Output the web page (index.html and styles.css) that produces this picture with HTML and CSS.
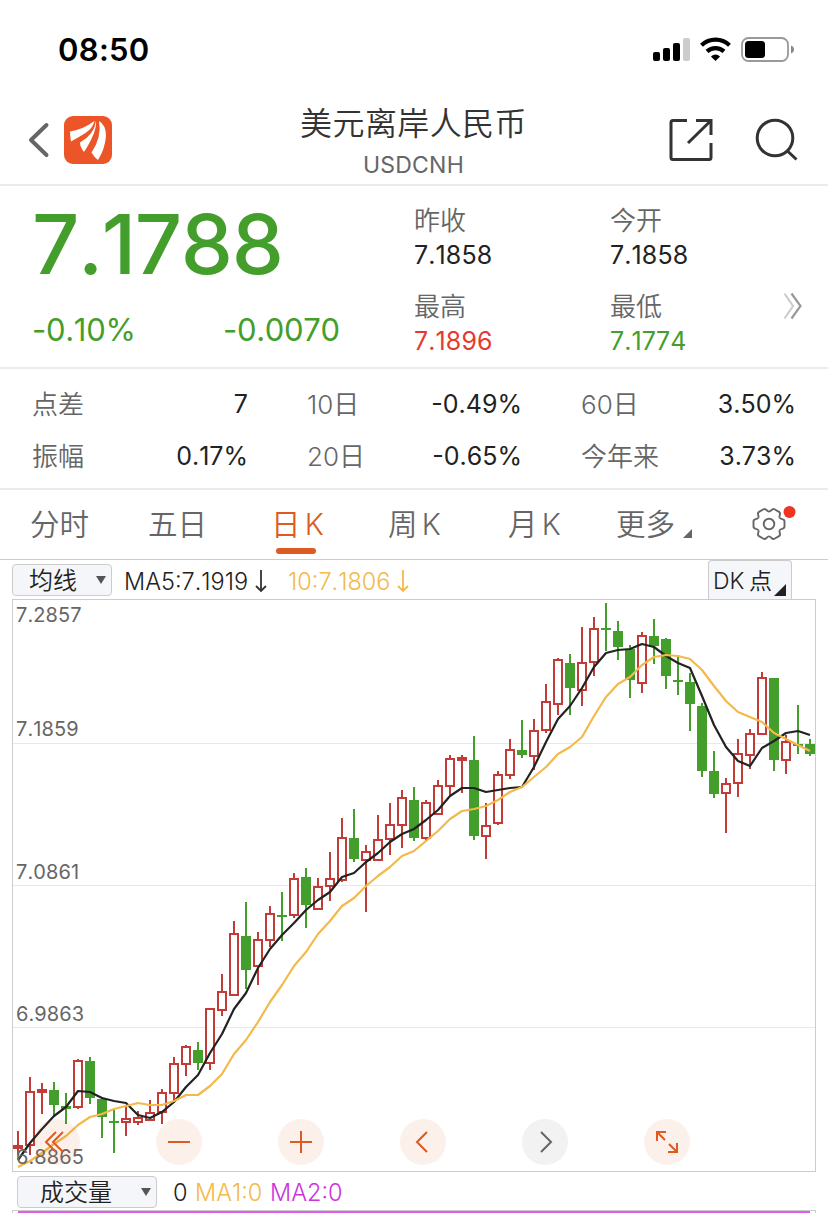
FILE: index.html
```html
<!DOCTYPE html>
<html lang="zh-CN">
<head>
    <meta charset="UTF-8">
    <meta name="viewport" content="width=device-width, initial-scale=1.0">
    <title>美元离岸人民币 USDCNH</title>
    <link rel="stylesheet" href="styles.css">
</head>
<body>
    <div class="statusbar">
        <span class="time">08:50</span>
        <svg class="status-icons" width="144" height="28" viewBox="652 36 144 28">
            <rect x="653" y="52" width="7" height="9" rx="2"/>
            <rect x="663" y="48" width="7" height="13" rx="2"/>
            <rect x="673" y="43" width="7" height="18" rx="2"/>
            <rect x="683" y="38" width="7" height="23" rx="2" fill="#ccc"/>
            <g fill="none" stroke="#000" stroke-width="4.2">
                <path d="M701.5 45.2a20.5 20.5 0 0 1 28 0"/>
                <path d="M707 51.4a12.5 12.5 0 0 1 17 0"/>
            </g>
            <path d="M715.5 61l-4.6-4.5q4.6-3.8 9.2 0z"/>
            <rect x="742" y="38" width="46" height="23" rx="6.5" fill="none" stroke="#999" stroke-width="1.8"/>
            <rect x="745" y="41" width="20" height="17" rx="3.5"/>
            <path d="M791 45.5q3 1.2 3 4t-3 4z" fill="#888"/>
        </svg>
    </div>

    <header class="header">
        <div class="header-left">
            <svg width="22" height="36" viewBox="0 0 22 36"><path d="M18.5 3L3 18l15.500 15" fill="none" stroke="#666" stroke-width="4" stroke-linecap="round" stroke-linejoin="round"/></svg>
            <svg class="logo" width="48" height="48" viewBox="0 0 48 48">
                <rect width="48" height="48" rx="9" fill="#ec5528"/>
                <path d="M6 15.500Q18 14 30.500 5Q29 12 21.500 17Q15 21 7 25.500Q6 20 6 15.500z" fill="#fff"/>
                <path d="M32 5Q33 16 20 36Q16 31 16 26.500Q30 19 32 5z" fill="#fff"/>
                <path d="M35 5Q42 9 42 20Q41 33 34 44Q30 41 27.500 36.500Q38 21 35 5z" fill="#fff"/>
            </svg>
        </div>
        <div class="header-title">
            <h1>美元离岸人民币</h1>
            <p>USDCNH</p>
        </div>
        <div class="header-right">
            <svg width="44" height="44" viewBox="669 118 44 44" fill="none" stroke="#333" stroke-width="3">
                <path d="M687 120.500h-14q-2 0-2 2v35q0 2 2 2h36q2 0 2-2v-14.500M696 120.500h15v14.500M711 120.500l-23 22.500"/>
            </svg>
            <svg width="44" height="44" viewBox="755 118 44 44" fill="none" stroke="#333" stroke-width="3">
                <circle cx="775" cy="138" r="17.800"/>
                <path d="M787.500 151l9 8.500"/>
            </svg>
        </div>
    </header>

    <section class="quote">
        <div class="price">
            <div class="price-now">7.1788</div>
            <div class="price-change"><span>-0.10%</span><span>-0.0070</span></div>
        </div>
        <div class="ohlc">
            <div><p>昨收</p><b>7.1858</b></div>
            <div><p>今开</p><b>7.1858</b></div>
            <div><p>最高</p><b class="up">7.1896</b></div>
            <div><p>最低</p><b class="down">7.1774</b></div>
        </div>
        <svg class="more" width="20" height="28" viewBox="0 0 20 28" fill="none" stroke-width="2.200">
            <path d="M1.500 1.500L10 14L1.500 26.500" stroke="#ccc"/>
            <path d="M8.500 1.500L17.500 14L8.500 26.500" stroke="#999"/>
        </svg>
    </section>

    <section class="stats">
        <div><span>点差</span><b>7</b></div>
        <div><span>10<i>日</i></span><b>-0.49%</b></div>
        <div><span>60<i>日</i></span><b>3.50%</b></div>
        <div><span>振幅</span><b>0.17%</b></div>
        <div><span>20<i>日</i></span><b>-0.65%</b></div>
        <div><span>今年来</span><b>3.73%</b></div>
    </section>

    <nav class="tabs">
        <a>分时</a>
        <a>五日</a>
        <a class="active">日 K</a>
        <a>周 K</a>
        <a>月 K</a>
        <a>更多<i class="corner"></i></a>
        <svg class="gear" width="46" height="40" viewBox="-18 -20 46 40">
            <defs><path id="lobe" d="M10.700 -6.200C12 -4 15.500 -5.800 15.500 -2.600V2.600C15.500 5.800 12 4 10.700 6.200"/></defs>
            <g fill="none" stroke="#666" stroke-width="1.900">
                <use href="#lobe"/>
                <use href="#lobe" transform="rotate(60)"/>
                <use href="#lobe" transform="rotate(120)"/>
                <use href="#lobe" transform="rotate(180)"/>
                <use href="#lobe" transform="rotate(240)"/>
                <use href="#lobe" transform="rotate(300)"/>
                <circle r="5.300"/>
            </g>
            <circle cx="20.500" cy="-12" r="6" fill="#f03322"/>
        </svg>
    </nav>

    <div class="indicator">
        <div class="select select-ma">均线<i class="arrow"></i></div>
        <span class="ma5">MA5:7.1919</span>
        <svg class="down-arrow" width="12" height="24" viewBox="0 0 12 24" fill="none" stroke="#333" stroke-width="1.800"><path d="M6 1v21M1 17l5 5l5-5"/></svg>
        <span class="ma10">10:7.1806</span>
        <svg class="down-arrow" width="12" height="24" viewBox="0 0 12 24" fill="none" stroke="#f3b94a" stroke-width="1.800"><path d="M6 1v21M1 17l5 5l5-5"/></svg>
        <div class="dk">DK 点<i class="corner"></i></div>
    </div>

    <div class="chart">
        <svg id="kline" width="804" height="573" viewBox="12 599 804 573"></svg>
        <div class="tools">
            <span><svg viewBox="-23 -23 46 46"><path d="M-1 -10L-11 0L-1 10M6 -10L-4 0L6 10"/></svg></span>
            <span><svg viewBox="-23 -23 46 46"><path d="M-11 0H11"/></svg></span>
            <span><svg viewBox="-23 -23 46 46"><path d="M-11 0H11M0 -11V11"/></svg></span>
            <span><svg viewBox="-23 -23 46 46"><path d="M4 -10L-6 0L4 10"/></svg></span>
            <span class="disabled"><svg viewBox="-23 -23 46 46"><path d="M-4 -10L6 0L-4 10"/></svg></span>
            <span><svg viewBox="-23 -23 46 46"><path d="M-1 -10H-10V-1M-10 -10L-2 -2M10 1V10H1M10 10L2 2"/></svg></span>
        </div>
    </div>

    <div class="volume">
        <div class="select select-vol">成交量<i class="arrow"></i></div>
        <span class="v0">0</span>
        <span class="v1">MA1:0</span>
        <span class="v2">MA2:0</span>
    </div>
    <div class="volume-chart"></div>

    <script src="chart.js"></script>
</body>
</html>
```

FILE: styles.css
```css
* {
    box-sizing: border-box;
}
body {
    margin: 0;
    width: 828px;
    height: 1213px;
    overflow: hidden;
    background-color: #fff;
    color: #222;
    font-family: Inter, "Noto Sans CJK SC", sans-serif;
    font-weight: 350;
    font-kerning: none;
}
h1, p {
    margin: 0;
    font-weight: 350;
}
b {
    font-weight: 400;
}
i {
    font-style: normal;
}
svg {
    display: block;
}
.statusbar {
    height: 98px;
    padding: 0 32px 0 58px;
    display: flex;
    justify-content: space-between;
}
.time {
    padding-top: 30px;
    font-size: 31px;
    line-height: 40px;
    font-weight: 600;
    color: #000;
    letter-spacing: 0.3px;
}
.status-icons {
    margin-top: 36px;
}
.header {
    height: 88px;
    border-bottom: 2px solid #ebebeb;
    display: grid;
    grid-template-columns: 200px 1fr 200px;
}
.header-left {
    padding: 18px 0 0 28px;
    display: flex;
    gap: 14px;
}
.header-left svg:first-child {
    margin-top: 6px;
}
.header-title {
    padding-right: 1px;
    text-align: center;
}
.header-title h1 {
    margin-top: 5px;
    font-size: 32px;
    line-height: 42px;
    letter-spacing: 0.4px;
    color: #333;
}
.header-title p {
    font-size: 23px;
    line-height: 40px;
    font-weight: 400;
    color: #666;
    letter-spacing: 0.2px;
}
.header-right {
    padding: 20px 29px 0 0;
    display: flex;
    justify-content: flex-end;
    gap: 42px;
}
.quote {
    height: 183px;
    border-bottom: 2px solid #ebebeb;
    display: flex;
}
.price {
    width: 414px;
    padding-left: 32px;
    color: #449e2b;
}
.price-now {
    height: 119px;
    font-size: 83px;
    line-height: 117px;
    font-weight: 540;
    letter-spacing: -1.4px;
}
.price-change {
    font-size: 31px;
    line-height: 50px;
    font-weight: 400;
    letter-spacing: -0.3px;
    display: grid;
    grid-template-columns: 191px 1fr;
}
.ohlc {
    width: 369px;
    padding-top: 17px;
    display: grid;
    grid-template-columns: 196px 1fr;
    grid-auto-rows: 86px;
    font-size: 25px;
}
.ohlc p {
    font-size: 26px;
    line-height: 36px;
    color: #666;
}
.ohlc b {
    display: block;
    line-height: 32px;
    letter-spacing: 0.1px;
}
.up {
    color: #e63a30;
}
.down {
    color: #449e2b;
}
.more {
    margin-top: 106px;
}
.stats {
    height: 121px;
    padding: 10px 32px 0;
    border-bottom: 2px solid #ebebeb;
    display: grid;
    grid-template-columns: 216px 215px 215px;
    column-gap: 59px;
    grid-auto-rows: 52px;
    line-height: 52px;
    font-size: 25px;
}
.stats div {
    display: flex;
    justify-content: space-between;
}
.stats b {
    line-height: 50px;
}
.stats span {
    color: #666;
    font-size: 26px;
}
.tabs {
    height: 70px;
    padding-left: 30px;
    border-bottom: 1px solid #ccc;
    display: grid;
    grid-template-columns: 118px 123px 117px 120px 108px 135px 1fr;
    font-size: 29.5px;
    line-height: 69px;
    color: #666;
}
.tabs a {
    position: relative;
    white-space: nowrap;
    word-spacing: -4px;
}
.tabs .active {
    color: #dd5a22;
}
.tabs .active::after {
    content: "";
    position: absolute;
    left: 5px;
    top: 58px;
    width: 40px;
    height: 6px;
    border-radius: 3px;
    background-color: #dd5a22;
}
.tabs .corner {
    display: inline-block;
    margin-left: 8px;
    border-left: 9px solid transparent;
    border-bottom: 9px solid #666;
    transform: translateY(3px);
}
.gear {
    margin-top: 14px;
}
.indicator {
    height: 39px;
    padding: 0 36px 0 12px;
    display: flex;
    font-size: 23.5px;
    line-height: 43px;
}
.select {
    border: 1px solid #ccc;
    border-radius: 4px;
    background-color: #f5f6f9;
    height: 32px;
    line-height: 33px;
    font-size: 24px;
    display: flex;
    align-items: center;
    justify-content: space-between;
}
.select-ma {
    width: 100px;
    margin: 4px 12px 0 0;
    padding: 0 5px 0 16px;
}
.arrow {
    border: 5px solid transparent;
    border-top: 8px solid #555;
    border-bottom: 0;
}
.ma5 {
    width: 131px;
}
.ma10 {
    width: 109px;
    margin-left: 21px;
    color: #f3b94a;
}
.down-arrow {
    margin-top: 9px;
}
.dk {
    position: relative;
    width: 84px;
    height: 39px;
    margin-left: auto;
    padding-left: 4px;
    border: 1px solid #ccc;
    border-bottom: 0;
    border-radius: 4px 4px 0 0;
    background-color: #f5f6f9;
    font-size: 23px;
    line-height: 41px;
    white-space: nowrap;
    word-spacing: -2px;
}
.dk .corner {
    position: absolute;
    right: 5px;
    bottom: 3px;
    border-left: 12px solid transparent;
    border-bottom: 12px solid #222;
}
.chart {
    position: relative;
    height: 573px;
    padding-left: 12px;
}
.tools {
    position: absolute;
    left: 34px;
    top: 520px;
    display: flex;
    gap: 76px;
}
.tools span {
    width: 46px;
    height: 46px;
    border-radius: 50%;
    background-color: rgba(221, 90, 34, 0.09);
}
.tools svg {
    fill: none;
    stroke: #dd5a22;
    stroke-width: 2;
}
.tools .disabled {
    background-color: #f2f2f2;
}
.tools .disabled svg {
    stroke: #666;
}
.axis {
    font-size: 20px;
    font-weight: 400;
    letter-spacing: 0.1px;
    fill: #666;
}
.volume {
    height: 38px;
    padding: 4px 0 0 17px;
    display: flex;
    font-size: 23.5px;
    line-height: 34px;
}
.select-vol {
    width: 140px;
    padding: 0 5px 0 22px;
}
.v0 {
    width: 22px;
    margin-left: 16px;
}
.v1 {
    width: 75px;
    color: #f3b94a;
}
.v2 {
    color: #cc33dd;
}
.volume-chart {
    width: 804px;
    height: 20px;
    margin-left: 12px;
    border: 1px solid #ccc;
}
.volume-chart::before {
    content: "";
    display: block;
    margin: 0 5px;
    height: 2px;
    background-color: #e25cf0;
}
```

FILE: chart.js
```js
// [direction, high, body top, body bottom, low]
const candles = [
    ['r', 1131, 1145, 1149, 1155], ['r', 1077, 1091, 1146, 1155], ['r', 1083, 1089, 1093, 1114],
    ['g', 1082, 1090, 1105, 1116], ['g', 1093, 1106, 1109, 1124], ['r', 1059, 1060, 1108, 1109],
    ['g', 1057, 1061, 1098, 1104], ['g', 1097, 1099, 1117, 1138], ['g', 1109, 1121, 1123, 1153],
    ['r', 1105, 1118, 1123, 1136], ['r', 1111, 1117, 1123, 1125], ['r', 1100, 1112, 1121, 1121],
    ['r', 1089, 1092, 1113, 1124], ['r', 1057, 1063, 1094, 1103], ['r', 1045, 1046, 1065, 1076],
    ['g', 1042, 1050, 1063, 1070], ['r', 1008, 1008, 1064, 1070], ['r', 974, 991, 1011, 1016],
    ['r', 921, 933, 996, 996], ['g', 902, 936, 970, 989], ['r', 932, 939, 967, 985],
    ['r', 906, 913, 941, 947], ['g', 892, 915, 917, 941], ['r', 873, 878, 916, 918],
    ['g', 868, 877, 905, 928], ['r', 878, 886, 910, 910], ['r', 852, 878, 887, 901],
    ['r', 818, 837, 881, 882], ['g', 809, 838, 859, 862], ['r', 845, 851, 861, 912],
    ['r', 815, 839, 861, 861], ['r', 803, 824, 840, 855], ['r', 790, 797, 826, 848],
    ['g', 787, 800, 838, 841], ['r', 800, 802, 839, 841], ['r', 780, 785, 815, 815],
    ['r', 755, 758, 787, 795], ['r', 755, 757, 761, 793], ['g', 736, 760, 836, 840],
    ['r', 803, 825, 837, 859], ['r', 771, 774, 824, 825], ['r', 739, 749, 776, 779],
    ['g', 720, 750, 755, 758], ['r', 719, 730, 757, 770], ['r', 684, 701, 731, 733],
    ['r', 658, 659, 705, 715], ['g', 654, 663, 688, 715], ['r', 627, 662, 691, 706],
    ['r', 617, 628, 663, 676], ['g', 603, 628, 630, 651], ['g', 621, 631, 647, 660],
    ['g', 645, 649, 680, 698], ['r', 632, 635, 684, 693], ['g', 619, 636, 646, 664],
    ['g', 638, 639, 676, 689], ['g', 655, 680, 682, 695], ['g', 673, 682, 704, 731],
    ['g', 703, 706, 771, 777], ['g', 751, 771, 794, 798], ['r', 778, 783, 794, 833],
    ['r', 739, 753, 784, 797], ['r', 729, 733, 756, 769], ['r', 672, 677, 735, 735],
    ['g', 678, 678, 760, 771], ['r', 735, 741, 761, 774], ['g', 705, 744, 746, 754],
    ['g', 739, 744, 754, 756]
];
const ma5 = [
    1160, 1143, 1129, 1116, 1107, 1091, 1092, 1098, 1101, 1103, 1115, 1118, 1112, 1102, 1087, 1075,
    1053, 1034, 1009, 993, 968, 949, 935, 923, 910, 900, 892, 877, 873, 862, 853, 842, 834, 829,
    820, 810, 796, 788, 788, 792, 790, 788, 787, 767, 742, 719, 706, 688, 667, 653, 650, 649, 644,
    647, 656, 663, 668, 696, 725, 747, 761, 766, 748, 741, 733, 731, 735
];
const ma10 = [
    1167, 1161, 1153, 1144, 1136, 1125, 1117, 1114, 1109, 1106, 1103, 1105, 1105, 1101, 1095, 1095,
    1086, 1074, 1054, 1040, 1022, 1002, 985, 966, 952, 934, 921, 906, 898, 886, 876, 867, 856, 851,
    841, 831, 819, 811, 809, 806, 800, 792, 787, 777, 767, 754, 747, 737, 716, 697, 684, 677, 665,
    657, 655, 656, 659, 670, 686, 701, 712, 717, 722, 733, 739, 745, 751
];
const labels = [['7.2857', 622], ['7.1859', 736], ['7.0861', 879], ['6.9863', 1021], ['6.8865', 1164]];

const colors = { r: '#c23b37', g: '#449e2b' };
const x = i => 18 + i * 12;
const line = (data, color) =>
    `<polyline points="${data.map((y, i) => x(i) + ',' + y).join(' ')}" fill="none" stroke="${color}" stroke-width="2.2" stroke-linejoin="round"/>`;

let html = '<rect x="12.5" y="599.5" width="803" height="572" fill="none" stroke="#ccc"/>';
[743.5, 885.5, 1027.5].forEach(y => {
    html += `<path d="M13 ${y}H815" stroke="#e8e8e8"/>`;
});

candles.forEach(([dir, high, top, bottom, low], i) => {
    const c = colors[dir];
    const cx = x(i);
    if (dir === 'g') {
        html += `<path d="M${cx} ${high}V${low}" stroke="${c}" stroke-width="2"/>`;
        html += `<rect x="${cx - 5}" y="${top}" width="10" height="${bottom - top}" fill="${c}"/>`;
    } else {
        html += `<path d="M${cx} ${high}V${top}M${cx} ${bottom}V${low}" stroke="${c}" stroke-width="2"/>`;
        html += `<rect x="${cx - 4}" y="${top + 1}" width="8" height="${bottom - top - 2}" fill="#fff" stroke="${c}" stroke-width="2"/>`;
    }
});

html += line(ma5, '#222') + line(ma10, '#f3b94a');
labels.forEach(([text, y]) => {
    html += `<text class="axis" x="16" y="${y}">${text}</text>`;
});
document.getElementById('kline').innerHTML = html;
```
